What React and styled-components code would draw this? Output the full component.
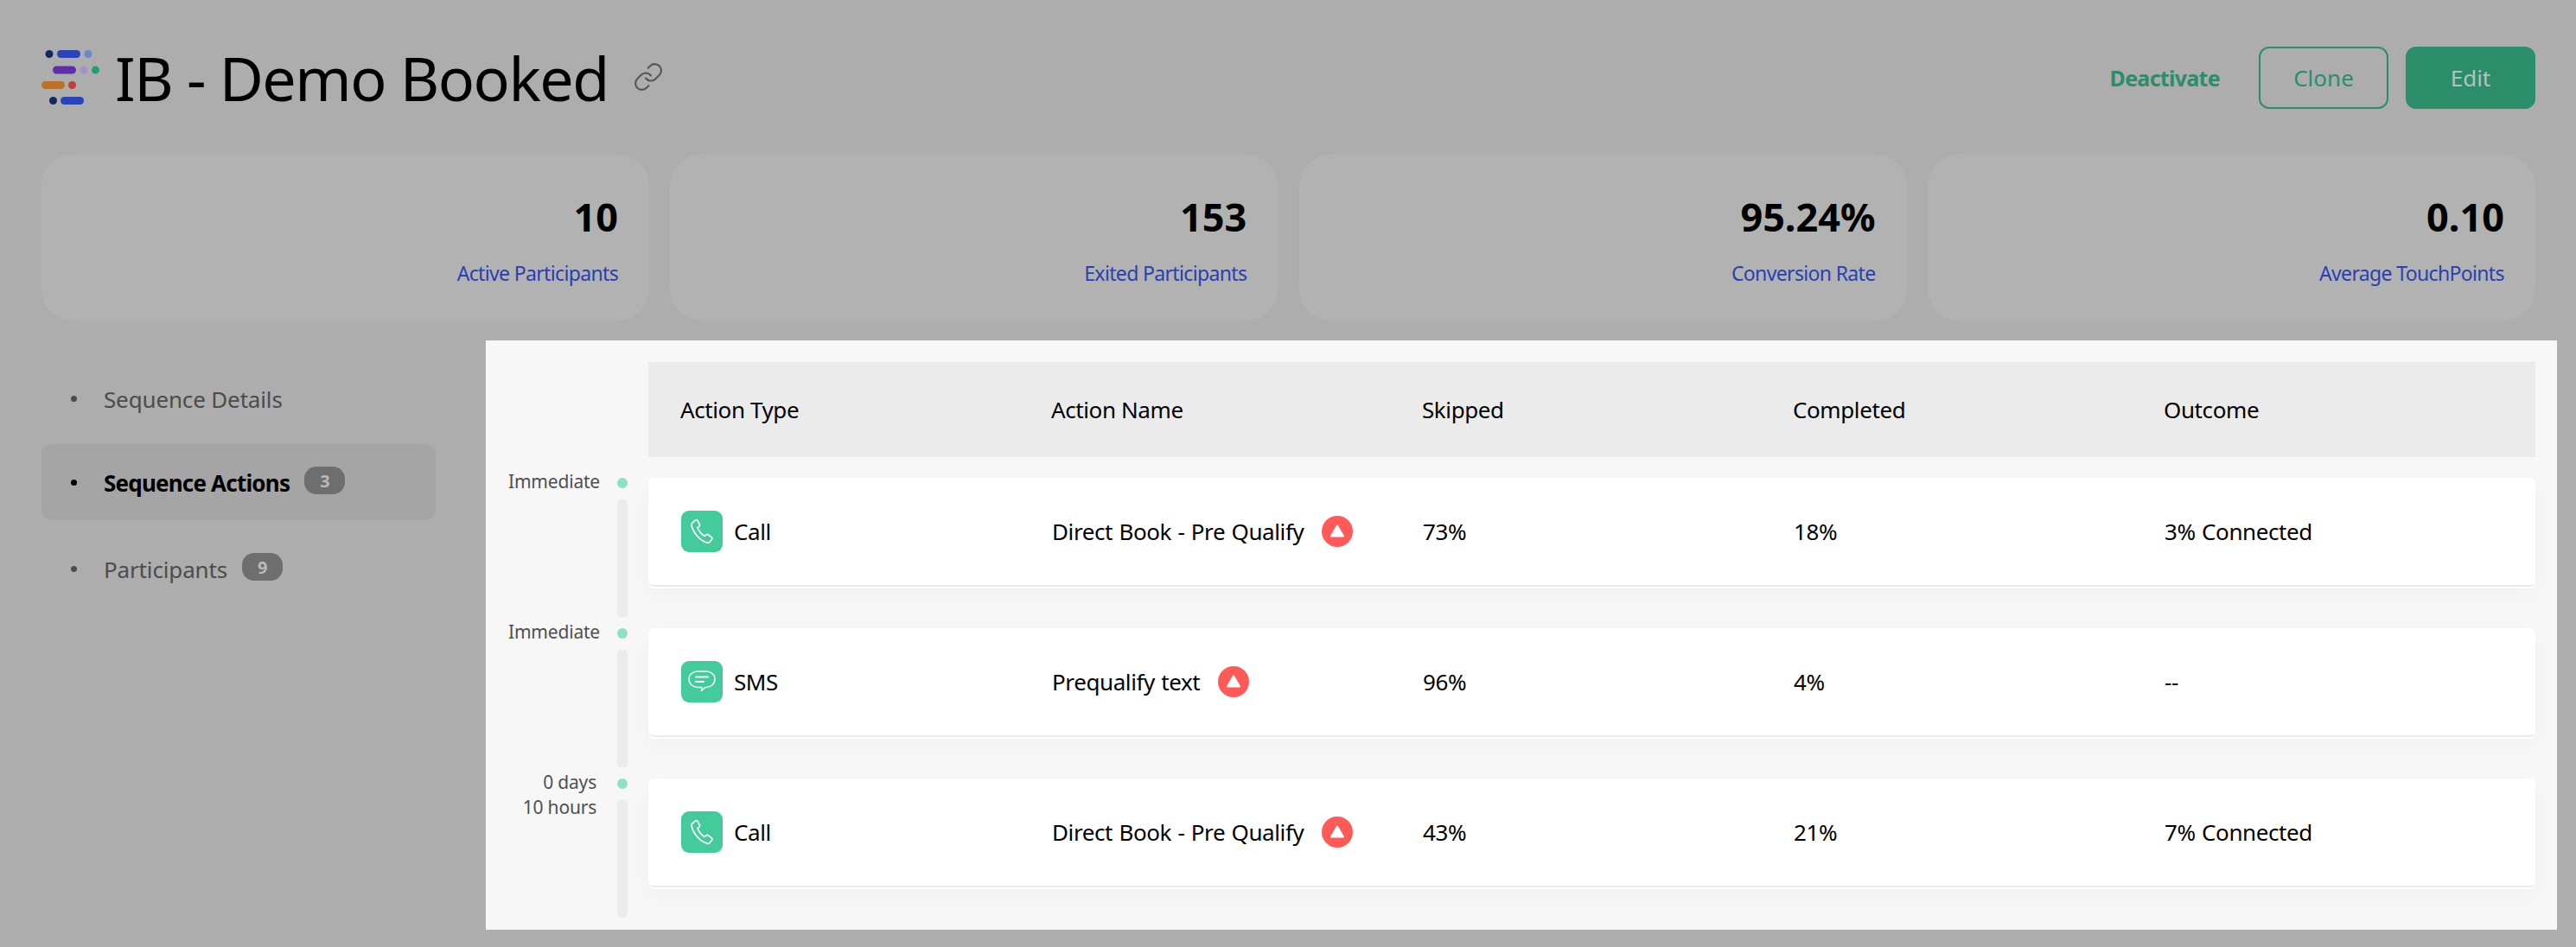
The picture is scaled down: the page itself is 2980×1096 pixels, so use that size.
import React from 'react';
import styled, { createGlobalStyle } from 'styled-components';
import { Link } from 'lucide-react';

const GlobalStyle = createGlobalStyle`
  * { box-sizing: border-box; }
  html, body { margin: 0; background: #adadad; }
  body { font-family: "Noto Sans", "Open Sans", sans-serif; color: #000; }
`;

const Page = styled.div`
  width: 2980px;
  height: 1096px;
  padding: 54px 22px 20px 48px;
  background: #adadad;
  overflow: hidden;
`;

const Header = styled.header`
  display: flex;
  align-items: center;
  height: 72px;
  padding-right: 25px;
`;

const Title = styled.h1`
  margin: 0 0 0 17px;
  font-size: 70px;
  line-height: 72px;
  font-weight: 400;
  letter-spacing: -1.5px;
`;

const LinkIcon = styled(Link)`
  margin-left: 28px;
  margin-top: -2px;
  color: #555;
`;

const Actions = styled.div`
  margin-left: auto;
  display: flex;
  align-items: center;
`;

const Deactivate = styled.span`
  font-size: 25px;
  font-weight: 700;
  color: #2c8d6b;
  margin-right: 45px;
  letter-spacing: -0.7px;
`;

const Button = styled.div`
  width: 150px;
  height: 72px;
  display: flex;
  align-items: center;
  justify-content: center;
  margin-left: ${p => (p.$filled ? '20px' : '0')};
  border-radius: 12px;
  border: 2px solid #2c8d6b;
  font-size: 26px;
  background: ${p => (p.$filled ? '#2c8d6b' : 'transparent')};
  color: ${p => (p.$filled ? '#b3c2bb' : '#2c8d6b')};
`;

const Stats = styled.section`
  display: grid;
  grid-template-columns: repeat(4, 703px);
  gap: 24.3px;
  margin-top: 53px;
`;

const StatCard = styled.div`
  height: 192px;
  padding: 42px 36px 0;
  border-radius: 36px;
  background: #b2b2b2;
  text-align: right;
`;

const StatValue = styled.div`
  font-size: 45px;
  line-height: 60px;
  font-weight: 700;
`;

const StatLabel = styled.div`
  margin-top: 19px;
  font-size: 23px;
  line-height: 32px;
  letter-spacing: -0.65px;
  color: #2a3fb0;
`;

const Body = styled.div`
  display: flex;
  margin-top: 23px;
`;

const Sidebar = styled.nav`
  width: 514px;
  flex: none;
  padding-top: 23px;
`;

const NavItem = styled.div`
  width: 456px;
  height: 88px;
  margin-bottom: ${p => (p.$active ? '12px' : '9px')};
  padding-left: 34px;
  display: flex;
  align-items: center;
  border-radius: 12px;
  background: ${p => (p.$active ? '#a5a5a5' : 'transparent')};
  font-size: 26px;
  font-weight: ${p => (p.$active ? 700 : 400)};
  letter-spacing: ${p => (p.$active ? '-0.8px' : '-0.15px')};
  color: ${p => (p.$active ? '#000' : '#4c4c4c')};
`;

const NavText = styled.span`
  padding-top: 2px;
`;

const Bullet = styled.span`
  width: 7px;
  height: 7px;
  border-radius: 50%;
  background: currentColor;
  margin-right: 31px;
`;

const Badge = styled.span`
  width: 47px;
  height: 32px;
  margin-left: 17px;
  margin-top: -4px;
  display: flex;
  align-items: center;
  justify-content: center;
  border-radius: 14px;
  background: #6e6e6e;
  color: #b9b9b9;
  font-size: 20px;
  font-weight: 700;
`;

const Panel = styled.main`
  width: 2396px;
  height: 682px;
  padding: 25px 25px 0 0;
  background: #f7f7f7;
`;

const TableHead = styled.div`
  height: 110px;
  margin-left: 188px;
  margin-bottom: 24px;
  padding-left: 37px;
  display: grid;
  grid-template-columns: repeat(5, 429px);
  align-items: center;
  background: #ebebeb;
  font-size: 26px;
  letter-spacing: -0.4px;
`;

const Step = styled.div`
  height: 174px;
  display: flex;
`;

const TimeColumn = styled.div`
  width: 188px;
  flex: none;
  display: flex;
  justify-content: flex-end;
  padding: 0 24px 12px 0;
`;

const TimeLabel = styled.div`
  margin: -10px ${p => (p.$multi ? '24px' : '20px')} 0 0;
  font-size: 21px;
  line-height: 29px;
  letter-spacing: -0.2px;
  color: #4f4f4f;
  text-align: right;
`;

const Track = styled.div`
  width: 12px;
  display: flex;
  flex-direction: column;
  gap: 12px;
`;

const Dot = styled.span`
  height: 12px;
  border-radius: 50%;
  background: #8fe0c1;
`;

const TrackBar = styled.span`
  flex: 1;
  border-radius: 6px;
  background: #ebebeb;
`;

const Row = styled.div`
  flex: 1;
  height: 126px;
  padding-left: 38px;
  display: grid;
  grid-template-columns: repeat(5, 429px);
  align-items: center;
  border-radius: 6px;
  background: #fff;
  border-bottom: 2px solid #ebebeb;
  box-shadow: 0 2px 0 #fff, 0 10px 24px rgba(0, 0, 0, 0.03);
  font-size: 26px;
  letter-spacing: -0.4px;
  word-spacing: 1px;
  margin-bottom: 48px;
`;

const Cell = styled.div`
  display: flex;
  align-items: center;
`;

const TypeIcon = styled.span`
  width: 48px;
  height: 48px;
  margin-right: 13px;
  display: flex;
  align-items: center;
  justify-content: center;
  border-radius: 9px;
  background: #45cb9b;
`;

const Alert = styled.svg`
  width: 36px;
  height: 36px;
  margin-left: 21px;
`;

const PhoneIcon = () => (
  <svg width="34" height="34" viewBox="0 0 30 30" fill="none" stroke="#fff" strokeWidth="1.5" strokeLinejoin="round">
    <path d="M5 6.500 8.500 3.500c.8-.6 1.600-.4 2 .4l2.200 4.200c.3.7.2 1.200-.4 1.700l-1.800 1.400c1.300 3.400 3.900 6.500 7.200 8.600l1.900-1.500c.6-.4 1.200-.4 1.700 0l3.700 2.800c.7.6.8 1.400.2 2.100l-2.600 3c-.6.6-1.300.8-2.100.5C12.800 24.100 6.400 17 4.300 8.600 4.100 7.800 4.400 7 5 6.500Z" />
  </svg>
);

const SmsIcon = () => (
  <svg width="32" height="30" viewBox="0 0 32 30" fill="none" stroke="#fff" strokeWidth="1.4" strokeLinejoin="round">
    <path d="M11 3h10c5.500 0 10 3.800 10 9s-4.500 9.500-10 9.500h-1l-4.500 4 .5-4h-5C5.500 21.500 1 17.200 1 12S5.500 3 11 3Z" />
    <path d="M9 9.500h14M9 15h9" strokeWidth="1.8" strokeLinecap="round" />
  </svg>
);

const AlertIcon = () => (
  <Alert viewBox="0 0 36 36">
    <circle cx="18" cy="18" r="18" fill="#fd5a58" />
    <path d="M18 11.500 25 23.500H11Z" fill="#fff" stroke="#fff" strokeWidth="2" strokeLinejoin="round" />
  </Alert>
);

const Logo = () => (
  <svg width="68" height="72" viewBox="48 54 68 72">
    <circle cx="57" cy="62.500" r="4.500" fill="#12275f" />
    <rect x="66" y="58" width="27" height="9" rx="4.500" fill="#2a44b5" />
    <circle cx="102" cy="62.500" r="4.500" fill="#6e87c5" />
    <rect x="61" y="76.500" width="27" height="9" rx="4.500" fill="#5e2fa8" />
    <circle cx="97" cy="81" r="4.500" fill="#a193c8" />
    <circle cx="110.500" cy="81" r="4.500" fill="#2a9b73" />
    <rect x="48" y="94" width="27" height="9" rx="4.500" fill="#b8722b" />
    <circle cx="83.500" cy="98.500" r="4.500" fill="#c33b3b" />
    <circle cx="61.500" cy="116.500" r="4.500" fill="#12275f" />
    <rect x="70" y="112" width="27" height="9" rx="4.500" fill="#2a44b5" />
  </svg>
);

const stats = [
  { value: '10', label: 'Active Participants' },
  { value: '153', label: 'Exited Participants' },
  { value: '95.24%', label: 'Conversion Rate' },
  { value: '0.10', label: 'Average TouchPoints' },
];

const steps = [
  { time: ['Immediate'], type: 'Call', name: 'Direct Book - Pre Qualify', skipped: '73%', completed: '18%', outcome: '3% Connected' },
  { time: ['Immediate'], type: 'SMS', name: 'Prequalify text', skipped: '96%', completed: '4%', outcome: '--' },
  { time: ['0 days', '10 hours'], type: 'Call', name: 'Direct Book - Pre Qualify', skipped: '43%', completed: '21%', outcome: '7% Connected' },
];

const App = () => (
  <Page>
    <GlobalStyle />
    <Header>
      <Logo />
      <Title>IB - Demo Booked</Title>
      <LinkIcon size={36} strokeWidth={1.4} />
      <Actions>
        <Deactivate>Deactivate</Deactivate>
        <Button>Clone</Button>
        <Button $filled>Edit</Button>
      </Actions>
    </Header>

    <Stats>
      {stats.map(stat => (
        <StatCard key={stat.label}>
          <StatValue>{stat.value}</StatValue>
          <StatLabel>{stat.label}</StatLabel>
        </StatCard>
      ))}
    </Stats>

    <Body>
      <Sidebar>
        <NavItem><Bullet /><NavText>Sequence Details</NavText></NavItem>
        <NavItem $active><Bullet /><NavText>Sequence Actions</NavText><Badge>3</Badge></NavItem>
        <NavItem><Bullet /><NavText>Participants</NavText><Badge>9</Badge></NavItem>
      </Sidebar>
      <Panel>
        <TableHead>
          <div>Action Type</div>
          <div>Action Name</div>
          <div>Skipped</div>
          <div>Completed</div>
          <div>Outcome</div>
        </TableHead>
        {steps.map((step, index) => (
          <Step key={index}>
            <TimeColumn>
              <TimeLabel $multi={step.time.length > 1}>
                {step.time.map(line => <div key={line}>{line}</div>)}
              </TimeLabel>
              <Track>
                <Dot />
                <TrackBar />
              </Track>
            </TimeColumn>
            <Row>
              <Cell>
                <TypeIcon>{step.type === 'Call' ? <PhoneIcon /> : <SmsIcon />}</TypeIcon>
                {step.type}
              </Cell>
              <Cell>{step.name}<AlertIcon /></Cell>
              <Cell>{step.skipped}</Cell>
              <Cell>{step.completed}</Cell>
              <Cell>{step.outcome}</Cell>
            </Row>
          </Step>
        ))}
      </Panel>
    </Body>
  </Page>
);

export default App;
